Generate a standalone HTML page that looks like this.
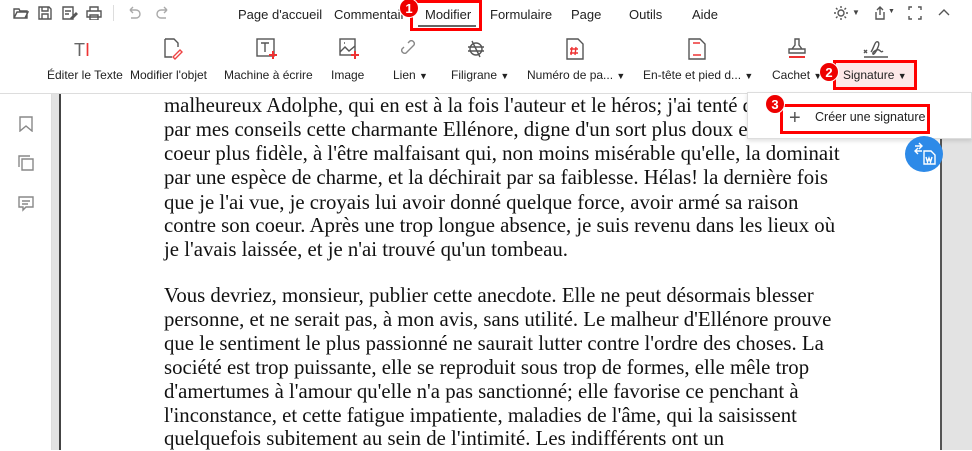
<!DOCTYPE html>
<html><head><meta charset="utf-8"><style>
*{margin:0;padding:0;box-sizing:border-box}
body{width:972px;height:450px;overflow:hidden;background:#fff;position:relative;font-family:"Liberation Sans",sans-serif;color:#222}
.a{position:absolute;white-space:nowrap}
.m{font-size:13px;top:7px}
.t{font-size:12px;top:68px}
.ic{position:absolute}
.tx{font-family:"Liberation Serif",serif;font-size:20.8px;color:#111;left:164px}
.badge{position:absolute;width:20px;height:20px;border-radius:50%;background:#e00;color:#fff;font-size:13px;font-weight:bold;text-align:center;line-height:20px;border:1px solid #fff}
.box{position:absolute;border:3px solid #f00}
svg{stroke:#555;fill:none;stroke-width:1.4}
</style></head><body>
<svg class="ic" style="left:13px;top:6px" width="16" height="14"><path d="M1 3h5l1 2h7v7H1z M1 12l3-6h11l-3 6"/></svg>
<svg class="ic" style="left:38px;top:6px" width="14" height="14"><path d="M1 1h10l2 2v10H1z M4 1v4h6V1 M4 13V8h6v5"/></svg>
<svg class="ic" style="left:62px;top:6px" width="16" height="14"><path d="M1 1h10v12H1z M3 5h6 M3 8h4 M9 12l5-5 1 1-5 5z"/></svg>
<svg class="ic" style="left:86px;top:6px" width="16" height="14"><path d="M4 1h8v4H4z M1 5h14v6H1z M4 9h8v5H4z"/></svg>
<div class="a" style="left:113px;top:5px;width:1px;height:16px;background:#ddd"></div>
<svg class="ic" style="left:127px;top:6px" width="14" height="14"><path d="M3 4h6a4 4 0 010 8H4 M3 4l3-3 M3 4l3 3" stroke="#aaa"/></svg>
<svg class="ic" style="left:156px;top:6px" width="14" height="14"><path d="M11 4H5a4 4 0 000 8h5 M11 4L8 1 M11 4L8 7" stroke="#aaa"/></svg>
<div class="a m" style="left:238px">Page d'accueil</div>
<div class="a m" style="left:334px">Commentair</div>
<div class="a m" style="left:425px">Modifier</div>
<div class="a" style="left:418px;top:25px;width:58px;height:2px;background:#666"></div>
<div class="box" style="left:410px;top:0;width:72px;height:31px"></div>
<div class="badge" style="left:399px;top:-2px">1</div>
<div class="a m" style="left:490px">Formulaire</div>
<div class="a m" style="left:571px">Page</div>
<div class="a m" style="left:629px">Outils</div>
<div class="a m" style="left:692px">Aide</div>
<svg class="ic" style="left:833px;top:5px" width="16" height="16"><circle cx="8" cy="8" r="3"/><path d="M8 1v2 M8 13v2 M1 8h2 M13 8h2 M3 3l1.5 1.5 M11.5 11.5L13 13 M3 13l1.5-1.5 M11.5 4.5L13 3"/></svg>
<div class="a" style="left:852px;top:8px;font-size:8px;color:#444">▼</div>
<svg class="ic" style="left:873px;top:6px" width="16" height="14"><path d="M3 6v7h8V6 M7 1v8 M4 4l3-3 3 3"/></svg>
<div class="a" style="left:888px;top:8px;font-size:7px;color:#444">▼</div>
<svg class="ic" style="left:908px;top:6px" width="14" height="14"><path d="M1 4V1h3 M10 1h3v3 M13 10v3h-3 M4 13H1v-3"/></svg>
<svg class="ic" style="left:938px;top:8px" width="12" height="8"><path d="M1 7l5-5 5 5"/></svg>
<div class="a" style="left:74px;top:40px;font-size:18px;color:#666">T<span style="color:#e33">I</span></div>
<svg class="ic" style="left:162px;top:38px" width="22" height="22"><path d="M3 1h9l4 4v4 M3 1v18h7"/><path d="M11 19l7-7 2 2-7 7z" stroke="#e44"/></svg>
<svg class="ic" style="left:256px;top:38px" width="22" height="22"><rect x="1" y="1" width="17" height="17"/><path d="M5 5h8 M9 5v9"/><path d="M17 13v8 M13 17h8" stroke="#e33" stroke-width="2"/></svg>
<svg class="ic" style="left:339px;top:38px" width="22" height="22"><rect x="1" y="1" width="15" height="16"/><path d="M1 14l5-5 4 4 6-5 M5 5h1"/><path d="M16 13v8 M12 17h8" stroke="#e33" stroke-width="2"/></svg>
<svg class="ic" style="left:401px;top:40px" width="18" height="18"><path d="M7 11l-2 2a3 3 0 01-4-4l2-2 M11 7l2-2a3 3 0 00-4-4L7 3 M6 12l6-6" stroke="#888"/></svg>
<svg class="ic" style="left:467px;top:40px" width="18" height="18"><circle cx="9" cy="9" r="6"/><path d="M1 7h16 M1 11h16 M5 1l8 16"/></svg>
<svg class="ic" style="left:566px;top:38px" width="18" height="22"><path d="M1 1h11l5 5v15H1z"/><path d="M6 9l-1 8 M10 9l-1 8 M4 11h8 M4 15h8" stroke="#e33"/></svg>
<svg class="ic" style="left:688px;top:38px" width="18" height="22"><path d="M1 1h11l5 5v15H1z"/><path d="M5 5h7 M5 17h8" stroke="#e33"/></svg>
<svg class="ic" style="left:786px;top:38px" width="22" height="22"><path d="M9 1h4v6l3 4H6l3-4z M3 11h16v4H3z"/><path d="M3 19h16" stroke="#e33" stroke-width="2"/></svg>
<svg class="ic" style="left:862px;top:38px" width="28" height="22"><path d="M2 12l3 3 M5 12l-3 3 M9 14c3-4 4-12 7-10s-4 14-5 12 4-5 6-4 2 3 4 1"/><path d="M2 19h24"/></svg>
<div class="a t" style="left:47px">Éditer le Texte</div>
<div class="a t" style="left:130px">Modifier l'objet</div>
<div class="a t" style="left:224px">Machine à écrire</div>
<div class="a t" style="left:331px">Image</div>
<div class="a t" style="left:393px">Lien <span style="font-size:9px">▼</span></div>
<div class="a t" style="left:451px">Filigrane <span style="font-size:9px">▼</span></div>
<div class="a t" style="left:527px">Numéro de pa... <span style="font-size:9px">▼</span></div>
<div class="a t" style="left:643px">En-tête et pied d... <span style="font-size:9px">▼</span></div>
<div class="a t" style="left:772px">Cachet <span style="font-size:9px">▼</span></div>
<div class="a" style="left:836px;top:60px;width:78px;height:30px;background:#fde8e8"></div>
<div class="box" style="left:833px;top:60px;width:84px;height:30px"></div>
<div class="a t" style="left:843px">Signature <span style="font-size:9px">▼</span></div>
<div class="badge" style="left:819px;top:62px">2</div>
<div class="a" style="left:0;top:93px;width:972px;height:1px;background:#ddd"></div>
<div class="a" style="left:0;top:94px;width:52px;height:356px;background:#fff;border-right:1px solid #ddd"></div>
<div class="a" style="left:52px;top:94px;width:7px;height:356px;background:#e3e3e3"></div>
<div class="a" style="left:59px;top:94px;width:2px;height:356px;background:#444"></div>
<div class="a" style="left:940px;top:94px;width:2px;height:356px;background:#555"></div>
<div class="a" style="left:942px;top:94px;width:30px;height:356px;background:#e3e3e3"></div>
<svg class="ic" style="left:19px;top:116px" width="14" height="16"><path d="M1 1h12v14l-6-5-6 5z" stroke="#888"/></svg>
<svg class="ic" style="left:18px;top:155px" width="16" height="16"><path d="M4 4h11v11H4z M1 12V1h11" stroke="#888"/></svg>
<svg class="ic" style="left:18px;top:196px" width="16" height="16"><path d="M1 1h14v10H8l-3 3v-3H1z M4 5h8 M4 8h6" stroke="#888"/></svg>
<div class="a tx" style="top:94px">malheureux Adolphe, qui en est à la fois l'auteur et le héros; j'ai tenté d</div>
<div class="a tx" style="top:118px">par mes conseils cette charmante Ellénore, digne d'un sort plus doux e</div>
<div class="a tx" style="top:142px">coeur plus fidèle, à l'être malfaisant qui, non moins misérable qu'elle, la dominait</div>
<div class="a tx" style="top:166px">par une espèce de charme, et la déchirait par sa faiblesse. Hélas! la dernière fois</div>
<div class="a tx" style="top:191px">que je l'ai vue, je croyais lui avoir donné quelque force, avoir armé sa raison</div>
<div class="a tx" style="top:214px">contre son coeur. Après une trop longue absence, je suis revenu dans les lieux où</div>
<div class="a tx" style="top:238px">je l'avais laissée, et je n'ai trouvé qu'un tombeau.</div>
<div class="a tx" style="top:284px">Vous devriez, monsieur, publier cette anecdote. Elle ne peut désormais blesser</div>
<div class="a tx" style="top:308px">personne, et ne serait pas, à mon avis, sans utilité. Le malheur d'Ellénore prouve</div>
<div class="a tx" style="top:332px">que le sentiment le plus passionné ne saurait lutter contre l'ordre des choses. La</div>
<div class="a tx" style="top:356px">société est trop puissante, elle se reproduit sous trop de formes, elle mêle trop</div>
<div class="a tx" style="top:380px">d'amertumes à l'amour qu'elle n'a pas sanctionné; elle favorise ce penchant à</div>
<div class="a tx" style="top:404px">l'inconstance, et cette fatigue impatiente, maladies de l'âme, qui la saisissent</div>
<div class="a tx" style="top:427px">quelquefois subitement au sein de l'intimité. Les indifférents ont un</div>
<div class="a" style="left:747px;top:92px;width:225px;height:47px;background:#fff;border:1px solid #ddd;box-shadow:0 2px 4px rgba(0,0,0,.12)"></div>
<div class="box" style="left:780px;top:104px;width:150px;height:30px"></div>
<div class="a" style="left:789px;top:107px;font-size:20px;color:#555;font-weight:300">+</div>
<div class="a" style="left:815px;top:110px;font-size:12.5px">Créer une signature</div>
<div class="badge" style="left:765px;top:94px">3</div>
<div class="a" style="left:905px;top:136px;width:38px;height:36px;border-radius:50%;background:#2d8ae8"></div>
<svg class="ic" style="left:913px;top:142px" width="24" height="24"><path d="M2 4h7 M6 1l3 3-3 3 M9 9H2 M5 6L2 9l3 3 M11 9h7l4 4v9H11z" stroke="#fff"/><path d="M13 15l1.5 5 1.5-4 1.5 4 1.5-5" stroke="#fff"/></svg>
</body></html>
